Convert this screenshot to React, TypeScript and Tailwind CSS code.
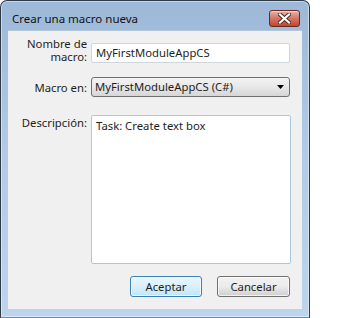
import React from "react";

const font = { fontFamily: '"Noto Sans", "Open Sans", sans-serif' };

const CloseButton = () => (
  <div className="w-[31px] h-[17px] rounded-[3px] border border-[#6b2a20] bg-gradient-to-b from-[#e7b3a7] via-[#d37563] to-[#c3432d] flex items-center justify-center shadow-[inset_0_1px_0_rgba(255,255,255,0.5)]">
    <svg width="13" height="11" viewBox="0 0 13 11">
      <path
        d="M2 1.5 L11 9.5 M11 1.5 L2 9.5"
        stroke="#4a2a26"
        strokeWidth="4"
        strokeLinecap="square"
      />
      <path
        d="M2 1.5 L11 9.5 M11 1.5 L2 9.5"
        stroke="#ffffff"
        strokeWidth="2.2"
        strokeLinecap="square"
      />
    </svg>
  </div>
);

const Label = ({ children, className = "" }: { children: React.ReactNode; className?: string }) => (
  <div className={`w-[79px] shrink-0 text-right text-[11.3px] leading-[13px] text-[#1e1e1e] ${className}`}>
    {children}
  </div>
);

export default function App() {
  return (
    <div className="w-[358px] h-[318px] bg-white text-[11.3px]" style={font}>
      <div className="w-[310px] h-[318px] flex flex-col rounded-t-[7px] border border-[#2e3a46] border-b-[#2aa6c8] bg-gradient-to-b from-[#9db9d8] via-[#b3cbe6] to-[#bcd4ec] shadow-[inset_0_0_0_1px_rgba(255,255,255,0.45)]">
        {/* title bar */}
        <div className="h-[29px] shrink-0 flex items-start justify-between pl-[11px] pr-[9px]">
          <span className="mt-[11px] text-[11.5px] leading-[14px] text-[#111]">Crear una macro nueva</span>
          <div className="mt-[9px]">
            <CloseButton />
          </div>
        </div>

        {/* client */}
        <div className="flex-1 ml-[7px] mr-[7px] mb-[8px] bg-[#f0f0f0] border-t border-[#b4c8dc] flex flex-col pt-[12px] text-[#1e1e1e]">
          <div className="h-[20px] flex items-end gap-[4px]">
            <Label>
              Nombre de
              <br />
              macro:
            </Label>
            <div className="w-[199px] h-[20px] shrink-0 bg-white border border-[#cfd6dc] rounded-[2px] flex items-center pl-[4px] leading-none">
              MyFirstModuleAppCS
            </div>
          </div>

          <div className="flex items-center gap-[4px] mt-[14px]">
            <Label>Macro en:</Label>
            <div className="w-[199px] h-[20px] border border-[#707070] rounded-[3px] bg-gradient-to-b from-[#f3f3f3] via-[#e8e8e8] to-[#d6d6d6] flex items-center justify-between pl-[3px] pr-[5px] leading-none">
              <span>MyFirstModuleAppCS (C#)</span>
              <svg width="7" height="4" viewBox="0 0 7 4">
                <path d="M0 0 H7 L3.5 4 Z" fill="#000" />
              </svg>
            </div>
          </div>

          <div className="flex items-start gap-[4px] mt-[18px]">
            <Label className="pt-[1px]">Descripción:</Label>
            <div className="w-[200px] h-[149px] bg-white border border-[#a9c9e3] rounded-[2px] pl-[4px] pt-[2px] leading-[15px]">
              Task: Create text box
            </div>
          </div>

          <div className="flex justify-end gap-[15px] mt-[12px] pr-[12px]">
            <div className="w-[72px] h-[21px] rounded-[3px] border border-[#3c7fb1] bg-gradient-to-b from-[#eaf6fd] via-[#d9f0fc] to-[#bee6fd] shadow-[inset_0_0_0_1px_rgba(255,255,255,0.7)] flex items-center justify-center leading-none">
              Aceptar
            </div>
            <div className="w-[73px] h-[21px] rounded-[3px] border border-[#707070] bg-gradient-to-b from-[#f2f2f2] via-[#ebebeb] to-[#cfcfcf] shadow-[inset_0_0_0_1px_rgba(255,255,255,0.7)] flex items-center justify-center leading-none">
              Cancelar
            </div>
          </div>
        </div>
      </div>
    </div>
  );
}
